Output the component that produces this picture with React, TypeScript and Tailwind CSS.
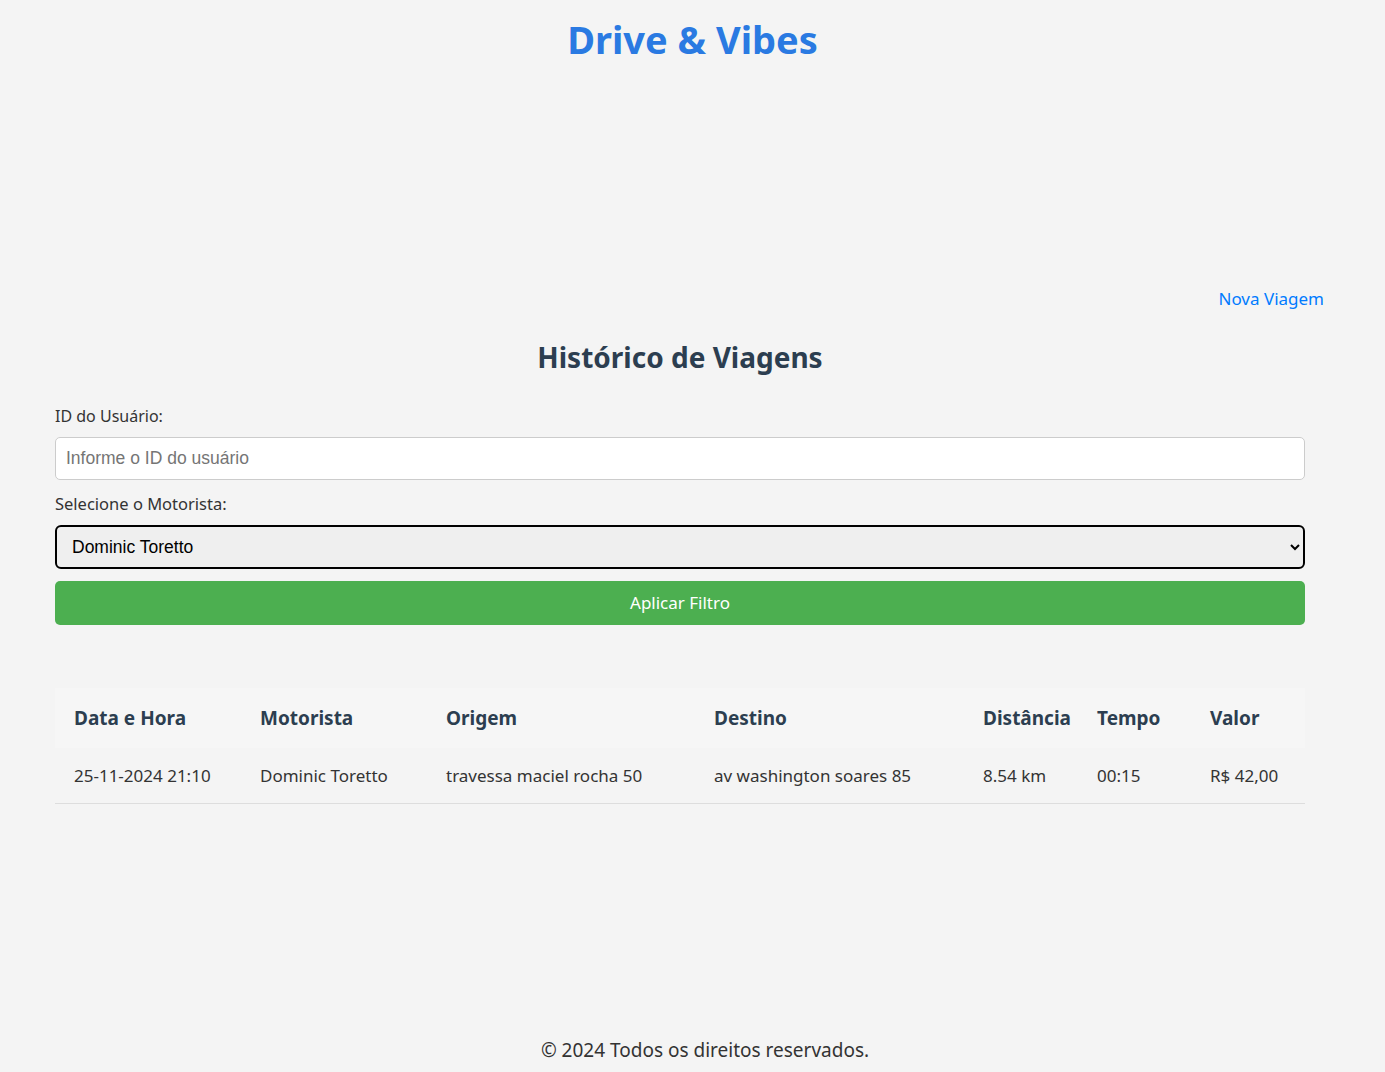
import React from "react";

const trips = [
  {
    date: "25-11-2024 21:10",
    driver: "Dominic Toretto",
    origin: "travessa maciel rocha 50",
    destination: "av washington soares 85",
    distance: "8.54 km",
    time: "00:15",
    value: "R$ 42,00",
  },
];

export default function App() {
  return (
    <div className="min-h-screen bg-[#f4f4f4] flex flex-col font-['Noto_Sans',sans-serif]">
      <header className="h-[82px] flex items-center justify-center">
        <h1 className="text-[38px] font-bold text-[#2a7ae2] leading-none -mt-[4px]">
          Drive &amp; Vibes
        </h1>
      </header>

      <main className="flex-1">
        <div className="h-[200px]" />
        <div className="flex justify-end pr-[61px] h-[34px] items-center">
          <a className="text-[17px] text-[#007bff]" href="#">
            Nova Viagem
          </a>
        </div>

        <div className="ml-[55px] w-[1250px]">
          <h2 className="text-center text-[28px] font-bold text-[#2c3e50] mt-[21px] h-[40px] leading-[40px]">
            Histórico de Viagens
          </h2>

          <div className="mt-[28px] flex flex-col">
            <label className="text-[16px] text-[#333] leading-[22px]">
              ID do Usuário:
            </label>
            <input
              className="mt-[10px] h-[43px] w-full rounded-[5px] border border-[#ccc] bg-white px-[10px] text-[17.5px] font-['Liberation_Sans',Arial,sans-serif] placeholder:text-[#757575] outline-none"
              placeholder="Informe o ID do usuário"
            />
            <label className="mt-[13px] text-[16.5px] text-[#333] leading-[22px]">
              Selecione o Motorista:
            </label>
            <select
              className="mt-[10px] h-[44px] w-full rounded-[6px] border-2 border-black bg-[#efefef] pl-[11px] text-[17.5px] text-black font-['Liberation_Sans',Arial,sans-serif]"
              defaultValue="dom"
            >
              <option value="dom">Dominic Toretto</option>
            </select>
            <button className="mt-[12px] h-[44px] w-full rounded-[5px] bg-[#4caf50] text-[17px] text-white">
              Aplicar Filtro
            </button>
          </div>

          <table className="mt-[63px] w-full border-collapse table-fixed">
            <thead>
              <tr className="bg-[#f6f6f6] h-[60px]">
                <th className="w-[186px] px-[19px] text-left text-[19px] font-bold text-[#2c3e50]">Data e Hora</th>
                <th className="w-[186px] px-[19px] text-left text-[19px] font-bold text-[#2c3e50]">Motorista</th>
                <th className="w-[268px] px-[19px] text-left text-[19px] font-bold text-[#2c3e50]">Origem</th>
                <th className="w-[269px] px-[19px] text-left text-[19px] font-bold text-[#2c3e50]">Destino</th>
                <th className="w-[114px] px-[19px] text-left text-[19px] font-bold text-[#2c3e50] whitespace-nowrap">Distância</th>
                <th className="w-[113px] px-[19px] text-left text-[19px] font-bold text-[#2c3e50]">Tempo</th>
                <th className="px-[19px] text-left text-[19px] font-bold text-[#2c3e50]">Valor</th>
              </tr>
            </thead>
            <tbody>
              {trips.map((t, i) => (
                <tr key={i} className="h-[55px] border-b border-[#ddd] text-[17px] text-[#333]">
                  <td className="px-[19px] whitespace-nowrap">{t.date}</td>
                  <td className="px-[19px] whitespace-nowrap">{t.driver}</td>
                  <td className="px-[19px] whitespace-nowrap">{t.origin}</td>
                  <td className="px-[19px] whitespace-nowrap">{t.destination}</td>
                  <td className="px-[19px] whitespace-nowrap">{t.distance}</td>
                  <td className="px-[19px] whitespace-nowrap">{t.time}</td>
                  <td className="px-[19px] whitespace-nowrap">{t.value}</td>
                </tr>
              ))}
            </tbody>
          </table>
        </div>
      </main>

      <footer className="h-[44px] flex justify-center pl-[25px] pt-[11px]">
        <p className="text-[19px] text-[#333] leading-[22px]">
          © 2024 Todos os direitos reservados.
        </p>
      </footer>
    </div>
  );
}
